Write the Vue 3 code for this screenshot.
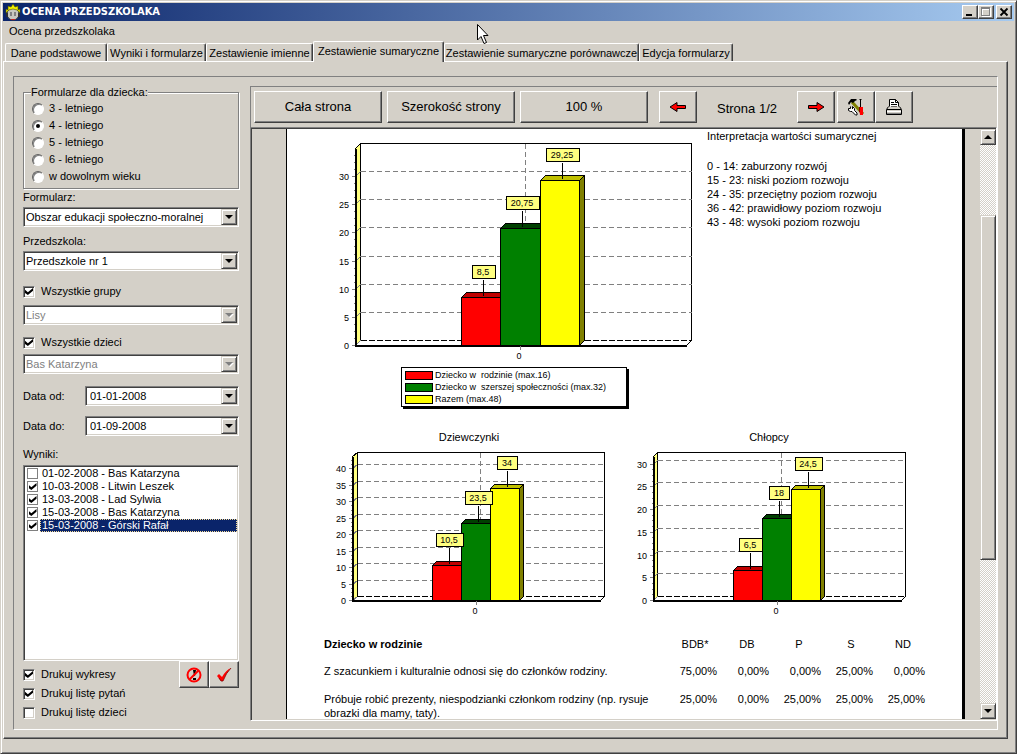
<script setup>
import { ref } from 'vue'

const tabs = [
  'Dane podstawowe',
  'Wyniki i formularze',
  'Zestawienie imienne',
  'Zestawienie sumaryczne',
  'Zestawienie sumaryczne porównawcze',
  'Edycja formularzy'
]
const activeTab = ref(3)

const ages = ['3 - letniego', '4 - letniego', '5 - letniego', '6 - letniego', 'w dowolnym wieku']
const age = ref(1)

const allGroups = ref(true)
const allChildren = ref(true)
const dateFrom = ref('01-01-2008')
const dateTo = ref('01-09-2008')

const results = ref([
  { text: '01-02-2008 - Bas Katarzyna', on: false },
  { text: '10-03-2008 - Litwin Leszek', on: true },
  { text: '13-03-2008 - Lad Sylwia', on: true },
  { text: '15-03-2008 - Bas Katarzyna', on: true },
  { text: '15-03-2008 - Górski Rafał', on: true }
])
const selectedResult = 4

const printOptions = ref([
  { text: 'Drukuj wykresy', on: true },
  { text: 'Drukuj listę pytań', on: true },
  { text: 'Drukuj listę dzieci', on: false }
])

const series = [
  { name: 'Dziecko w  rodzinie (max.16)', front: '#ff0000', top: '#c00000', side: '#800000' },
  { name: 'Dziecko w  szerszej społeczności (max.32)', front: '#008000', top: '#004000', side: '#004000' },
  { name: 'Razem (max.48)', front: '#ffff00', top: '#c0c000', side: '#808000' }
]

function makeChart(c) {
  const y = (v) => Math.round(c.base - v * c.unit)
  const majors = []
  const minors = []
  for (let v = 0; v <= c.max; v += 5) majors.push({ v, y: y(v) })
  for (let v = 1.25; y(v) > c.top + c.depth + 2; v += 1.25) {
    if (v % 5) minors.push(y(v))
  }
  const bars = c.values.map((value, i) => {
    const x = c.bars[i]
    const right = c.bars[i + 1]
    const t = y(value)
    const label = String(value).replace('.', ',')
    const lw = [0, 0, 20, 23, 27, 33][label.length]
    const mid = Math.round((x + right) / 2) + 2
    return { ...series[i], x, right, t, label, lw, mid }
  })
  return { ...c, majors, minors, gridlines: majors.slice(1).map((m) => m.y - c.depth), bars, center: Math.round((c.bars[0] + c.bars[3]) / 2) }
}

const total = makeChart({
  w: 360, h: 222, axis: 20, wall: 25, right: 356, top: 3, base: 205, depth: 5,
  unit: 5.63, max: 30, bars: [126, 165, 205, 244], values: [8.5, 20.75, 29.25]
})
const girls = makeChart({
  title: 'Dziewczynki', w: 280, h: 174, axis: 23, wall: 28, right: 275, top: 6, base: 154, depth: 4,
  unit: 3.29, max: 40, bars: [103, 132, 161, 190], values: [10.5, 23.5, 34]
})
const boys = makeChart({
  title: 'Chłopcy', w: 280, h: 174, axis: 24, wall: 28, right: 276, top: 6, base: 154, depth: 4,
  unit: 4.55, max: 30, bars: [104, 133, 162, 191], values: [6.5, 18, 24.5]
})
const groups = [
  { id: 'total', charts: [total] },
  { id: 'split', charts: [girls, boys] }
]

const notes = [
  '0 - 14: zaburzony rozwój',
  '15 - 23: niski poziom rozwoju',
  '24 - 35: przeciętny poziom rozwoju',
  '36 - 42: prawidłowy poziom rozwoju',
  '43 - 48: wysoki poziom rozwoju'
]

const grades = ['BDB*', 'DB', 'P', 'S', 'ND']
const rows = [
  { q: 'Z szacunkiem i kulturalnie odnosi się do członków rodziny.', v: ['75,00%', '0,00%', '0,00%', '25,00%', '0,00%'] },
  { q: 'Próbuje robić prezenty, niespodzianki członkom rodziny (np. rysuje obrazki dla mamy, taty).', v: ['25,00%', '0,00%', '25,00%', '25,00%', '25,00%'] }
]
</script>

<template>
  <div class="window">
    <header class="titlebar">
      <svg class="app-icon" width="16" height="17" viewBox="0 0 16 17">
        <circle cx="8" cy="10" r="6" fill="#c8c8c0" stroke="#404040" />
        <path d="M1 9 1 5 3 6 3 2 6 3 8 0 10 3 13 2 13 6 15 5 15 9 12 6 8 5 4 6Z" fill="#f0f000" stroke="#505000" stroke-width=".6" />
        <path d="M5 8h2v4H5zM9 8h2v4H9z" fill="#808080" />
        <path d="M1 9h2v4H1zM13 9h2v4h-2z" fill="#303030" />
        <path d="M6 15h4v1H6z" fill="#c02020" />
      </svg>
      <h1>OCENA PRZEDSZKOLAKA</h1>
      <div class="caption-buttons">
        <button class="cap" aria-label="Minimalizuj">
          <svg width="12" height="10" viewBox="0 0 12 10"><path d="M2 7h6v2H2z" fill="#000" /></svg>
        </button>
        <button class="cap" aria-label="Maksymalizuj" disabled>
          <svg width="12" height="10" viewBox="0 0 12 10" shape-rendering="crispEdges">
            <path d="M2 1h9v9H2zM3 3v6h7V3z" fill="#fff" fill-rule="evenodd" />
            <path d="M1 0h9v9H1zM2 2v6h7V2z" fill="#808080" fill-rule="evenodd" />
          </svg>
        </button>
        <button class="cap close" aria-label="Zamknij">
          <svg width="12" height="10" viewBox="0 0 12 10"><path d="M2.500 1.500 9.500 8.500M9.500 1.500 2.500 8.500" stroke="#000" stroke-width="1.800" /></svg>
        </button>
      </div>
    </header>

    <nav class="menu"><a href="#">Ocena przedszkolaka</a></nav>

    <div class="tabs" role="tablist">
      <button
        v-for="(t, i) in tabs"
        :key="t"
        role="tab"
        class="tab"
        :class="{ active: i === activeTab }"
        :aria-selected="i === activeTab"
        @click="activeTab = i"
      >{{ t }}</button>
    </div>

    <main class="tabpage">
      <div class="panel">
        <form class="sidebar" @submit.prevent>
          <fieldset>
            <legend>Formularze dla dziecka:</legend>
            <label v-for="(a, i) in ages" :key="a" class="radio">
              <input v-model="age" type="radio" name="age" :value="i" />{{ a }}
            </label>
          </fieldset>

          <label class="caption first" for="form">Formularz:</label>
          <div class="combo">
            <select id="form"><option>Obszar edukacji społeczno-moralnej</option></select>
            <span class="drop" aria-hidden="true"></span>
          </div>

          <label class="caption second" for="school">Przedszkola:</label>
          <div class="combo">
            <select id="school"><option>Przedszkole nr 1</option></select>
            <span class="drop" aria-hidden="true"></span>
          </div>

          <label class="check groups"><input v-model="allGroups" type="checkbox" />Wszystkie grupy</label>
          <div class="combo">
            <select aria-label="Grupa" :disabled="allGroups"><option>Lisy</option></select>
            <span class="drop" :class="{ off: allGroups }" aria-hidden="true"></span>
          </div>

          <label class="check children"><input v-model="allChildren" type="checkbox" />Wszystkie dzieci</label>
          <div class="combo">
            <select aria-label="Dziecko" :disabled="allChildren"><option>Bas Katarzyna</option></select>
            <span class="drop" :class="{ off: allChildren }" aria-hidden="true"></span>
          </div>

          <div class="date from">
            <label for="from">Data od:</label>
            <div class="combo">
              <input id="from" v-model="dateFrom" type="text" />
              <button class="drop" type="button" aria-label="Wybierz datę od"></button>
            </div>
          </div>
          <div class="date">
            <label for="to">Data do:</label>
            <div class="combo">
              <input id="to" v-model="dateTo" type="text" />
              <button class="drop" type="button" aria-label="Wybierz datę do"></button>
            </div>
          </div>

          <span id="results" class="caption results-caption">Wyniki:</span>
          <ul class="list" aria-labelledby="results">
            <li v-for="(r, i) in results" :key="i">
              <label :class="{ selected: i === selectedResult }">
                <input v-model="r.on" type="checkbox" /><span>{{ r.text }}</span>
              </label>
            </li>
          </ul>

          <div class="bottom">
            <div class="options">
              <label v-for="o in printOptions" :key="o.text" class="check">
                <input v-model="o.on" type="checkbox" />{{ o.text }}
              </label>
            </div>
            <div class="actions">
              <button class="btn act" type="button" aria-label="Anuluj">
                <svg width="16" height="16" viewBox="0 0 16 16">
                  <path d="M7 3h3l-1 6H8zM7 11h3v2H7z" fill="#000" />
                  <circle cx="8" cy="8" r="6.500" fill="none" stroke="#f00" stroke-width="2" />
                  <path d="M12.500 3.500 3.500 12.500" stroke="#f00" stroke-width="2" />
                </svg>
              </button>
              <button class="btn act" type="button" aria-label="Zatwierdź">
                <svg width="16" height="16" viewBox="0 0 16 16">
                  <path d="M1 9 3 7 6 10 Q10 3 15 1 Q10 6 7 14 L5 14Z" fill="#f00" />
                  <path d="M3 11 5 14H7Q10 6 15 1" fill="none" stroke="#800000" stroke-width=".8" />
                </svg>
              </button>
            </div>
          </div>
        </form>

        <section class="preview">
          <div class="toolbar">
            <button class="btn wide">Cała strona</button>
            <button class="btn wide">Szerokość strony</button>
            <button class="btn wide last">100 %</button>
            <button class="btn icon" aria-label="Poprzednia strona">
              <svg width="18" height="12" viewBox="0 0 18 12"><path d="M1 6 8 1.500V4.500H16.500V7.500H8V10.500Z" fill="#f00" stroke="#000" /></svg>
            </button>
            <span class="pageno">Strona 1/2</span>
            <button class="btn icon next" aria-label="Następna strona">
              <svg width="18" height="12" viewBox="0 0 18 12"><path d="M17 6 10 1.500V4.500H1.500V7.500H10V10.500Z" fill="#f00" stroke="#000" /></svg>
            </button>
            <button class="btn icon" aria-label="Ustawienia">
              <svg width="18" height="18" viewBox="0 0 18 18">
                <path d="M5 4 16 16" stroke="#808000" stroke-width="3" />
                <path d="M1 5 4 1H9L10 2 8 3 6 5 4 4 2 7Z" fill="#000" />
                <path d="M13.500 1V9M12.500 1.500h2" stroke="#000" />
                <path d="M12 9h4v8h-3z" fill="#f00" />
                <path d="M12.500 9V14" stroke="#800000" />
                <path d="M3.500 8.500V10.500H1.500V12.500L3.500 13.500H5L8.500 17H10V15L7.500 12.500V10.500L5.500 8.500V11" fill="#fff" stroke="#000" />
              </svg>
            </button>
            <button class="btn icon" aria-label="Drukuj">
              <svg width="18" height="18" viewBox="0 0 18 18">
                <path d="M4.500 9.500V1.500H10.500L13.500 4.500V9.500Z" fill="#fff" stroke="#000" />
                <path d="M10.500 1.500V4.500H13.500M6 4.500H9M6 6.500H12M6 8.500H12" stroke="#000" fill="none" />
                <path d="M3.500 8.500 1.500 11.500V16.500H16.500V11.500L14.500 8.500" fill="#d4d0c8" stroke="#000" />
                <path d="M2 11.500H16" stroke="#000" />
                <path d="M2 13.500H16" stroke="#fff" />
                <path d="M2 15.500H16" stroke="#808080" />
              </svg>
            </button>
          </div>

          <div class="scrollbox">
            <article class="page">
              <div v-for="g in groups" :key="g.id" :class="g.id">
                <figure v-for="(c, ci) in g.charts" :key="ci">
                  <figcaption v-if="c.title">{{ c.title }}</figcaption>
                  <svg class="chart" :width="c.w" :height="c.h" :viewBox="`0 0 ${c.w} ${c.h}`">
                    <g shape-rendering="crispEdges" stroke="#000" fill="none" transform="translate(.5 .5)">
                      <path :d="`M${c.wall} ${c.top}H${c.right}V${c.base - c.depth}`" />
                      <path
                        :d="`M${c.axis} ${c.base}V${c.top + c.depth}L${c.wall} ${c.top}V${c.base - c.depth}Z`"
                        fill="#ffff80"
                      />
                      <path :d="`M${c.axis} ${c.base}L${c.wall} ${c.base - c.depth}M${c.right} ${c.base - c.depth}L${c.right - c.depth} ${c.base}`" />
                      <path :d="`M${c.wall} ${c.base - c.depth}H${c.right}`" stroke-dasharray="6 2" />
                      <g stroke="#808080">
                        <path v-for="gy in c.gridlines" :key="gy" :d="`M${c.wall} ${gy}H${c.right}`" stroke-dasharray="5 3" />
                        <path :d="`M${c.center + c.depth} ${c.top}V${c.base - c.depth}`" stroke-dasharray="5 3" />
                        <path v-for="m in c.majors" :key="m.v" :d="`M${c.axis - 4} ${m.y}H${c.axis}L${c.wall} ${m.y - c.depth}`" />
                        <path v-for="m in c.minors" :key="m" :d="`M${c.axis - 2} ${m}H${c.axis}`" />
                      </g>
                      <path :d="`M${c.axis} ${c.top + c.depth}V${c.base}H${c.right - c.depth}`" stroke-width="2" />
                      <g v-for="b in c.bars" :key="b.label">
                        <path :d="`M${b.x} ${b.t}H${b.right}V${c.base}H${b.x}Z`" :fill="b.front" />
                        <path :d="`M${b.x} ${b.t}l${c.depth} ${-c.depth}H${b.right + c.depth}L${b.right} ${b.t}Z`" :fill="b.top" />
                        <path :d="`M${b.right} ${b.t}l${c.depth} ${-c.depth}V${c.base - c.depth}L${b.right} ${c.base}Z`" :fill="b.side" />
                      </g>
                      <path :d="`M${c.center} ${c.base}V${c.base + 4}`" stroke="#808080" />
                      <g v-for="b in c.bars" :key="b.label">
                        <path :d="`M${b.mid} ${b.t - 18}V${b.t - 2}`" />
                        <rect :x="b.mid - Math.floor(b.lw / 2)" :y="b.t - 32" :width="b.lw" height="13" fill="#ffff80" />
                      </g>
                    </g>
                    <text v-for="m in c.majors" :key="m.v" :x="c.axis - 6" :y="m.y + 4" text-anchor="end">{{ m.v }}</text>
                    <text v-for="b in c.bars" :key="b.label" :x="b.mid" :y="b.t - 22" text-anchor="middle">{{ b.label }}</text>
                    <text :x="c.center - 1" :y="c.base + 14" text-anchor="middle">0</text>
                  </svg>
                  <ul v-if="!c.title" class="key">
                    <li v-for="s in series" :key="s.name"><i :style="{ background: s.front }"></i>{{ s.name }}</li>
                  </ul>
                </figure>
                <div v-if="g.id === 'total'" class="notes">
                  <h2>Interpretacja wartości sumarycznej</h2>
                  <p v-for="n in notes" :key="n">{{ n }}</p>
                </div>
              </div>

              <table>
                <thead>
                  <tr>
                    <th class="q" scope="col">Dziecko w rodzinie</th>
                    <th v-for="gr in grades" :key="gr" scope="col">{{ gr }}</th>
                  </tr>
                </thead>
                <tbody>
                  <tr v-for="r in rows" :key="r.q">
                    <td class="q">{{ r.q }}</td>
                    <td v-for="(v, i) in r.v" :key="i">{{ v }}</td>
                  </tr>
                </tbody>
              </table>
            </article>

            <div class="scrollbar">
              <button class="arrow up" aria-label="Przewiń w górę"></button>
              <div class="track">
                <div class="before"></div>
                <div class="thumb"></div>
                <div class="after"></div>
              </div>
              <button class="arrow down" aria-label="Przewiń w dół"></button>
            </div>
          </div>
        </section>
      </div>
    </main>

    <svg class="pointer" width="13" height="22" viewBox="0 0 13 22" aria-hidden="true">
      <path d="M1.500 1.500V17L5 13.500 8 20.500 10.500 19.500 7.500 12.500H12Z" fill="#fff" stroke="#000" />
    </svg>
  </div>
</template>

<style>
body {
  background: #d4d0c8;
}
</style>

<style scoped>
.window,
.window * {
  box-sizing: border-box;
}
.window {
  position: relative;
  display: flex;
  flex-direction: column;
  height: 100vh;
  padding: 2px;
  overflow: hidden;
  border: 1px solid;
  border-color: #d4d0c8 #404040 #404040 #d4d0c8;
  box-shadow: inset 1px 1px #fff, inset -1px -1px #808080;
  background: #d4d0c8;
  color: #000;
  font: 11px/13px "Liberation Sans", Arial, sans-serif;
}
button,
input,
select {
  margin: 0;
  font: inherit;
  color: inherit;
}
button {
  padding: 0;
  border-radius: 0;
}
ul,
figure,
h1,
h2,
p {
  margin: 0;
  padding: 0;
  list-style: none;
}

/* title bar */
.titlebar {
  display: flex;
  flex: none;
  align-items: center;
  height: 18px;
  padding: 0 2px;
  background: linear-gradient(90deg, #0a246a, #a6caf0);
}
.titlebar h1 {
  flex: 1;
  margin-left: 1px;
  color: #fff;
  font: bold 11px/14px "DejaVu Sans Condensed", "DejaVu Sans", sans-serif;
}
.caption-buttons {
  display: flex;
}
.cap {
  display: flex;
  width: 16px;
  height: 14px;
  padding: 1px;
  border: 1px solid;
  border-color: #fff #404040 #404040 #fff;
  box-shadow: inset -1px -1px #808080;
  background: #d4d0c8;
}
.cap.close {
  margin-left: 2px;
}
.menu {
  flex: none;
  height: 20px;
  padding: 4px 6px;
}
.menu a {
  color: #000;
  text-decoration: none;
}

/* tabs */
.tabs {
  display: grid;
  flex: none;
  grid-template-columns: 102px 99px 107px 131px 195px 94px;
  align-items: end;
  height: 20px;
  padding-left: 2px;
}
.tab {
  height: 18px;
  padding: 1px 0 0;
  border: 1px solid;
  border-color: #fff #404040 transparent #fff;
  border-bottom: 0;
  border-radius: 2px 2px 0 0;
  box-shadow: inset -1px 0 #808080;
  background: #d4d0c8;
  text-align: center;
  white-space: nowrap;
}
.tab.active {
  z-index: 1;
  height: 21px;
  margin-bottom: -1px;
  padding-bottom: 3px;
}
.tabpage {
  display: flex;
  flex: 1;
  min-height: 0;
  margin: 0 6px 12px 0;
  padding: 14px 9px 8px;
  border: 1px solid;
  border-color: #fff #404040 #404040 #fff;
  box-shadow: inset -1px -1px #808080;
}
.panel {
  display: flex;
  flex: 1;
  gap: 11px;
  min-width: 0;
  padding: 9px 0 8px 9px;
  border: 1px solid;
  border-color: #808080 #fff #fff #808080;
}

/* sidebar */
.sidebar {
  display: flex;
  flex: none;
  flex-direction: column;
  width: 216px;
}
fieldset {
  min-width: 0;
  margin: 0;
  padding: 1px 8px 3px;
  border: 1px solid #808080;
  box-shadow: 1px 1px #fff, inset 1px 1px #fff;
}
legend {
  margin-left: -1px;
  padding: 0;
  background: #d4d0c8;
}
.radio {
  display: flex;
  align-items: center;
  height: 17px;
}
input[type='radio'] {
  display: grid;
  place-items: center;
  width: 12px;
  height: 12px;
  margin-right: 5px;
  appearance: none;
  border: 1px solid;
  border-color: #606060 #fff #fff #606060;
  border-radius: 50%;
  background: #fff;
  box-shadow: inset 1px 1px #808080;
}
input[type='radio']:checked::before {
  content: '';
  width: 4px;
  height: 4px;
  border-radius: 50%;
  background: #000;
}
.caption {
  height: 13px;
}
.caption.first {
  margin: 2px 0 3px;
}
.caption.second {
  margin: 8px 0 3px;
}
.combo {
  display: grid;
  grid-template-columns: 1fr 16px;
  height: 20px;
  padding: 1px;
  border: 1px solid;
  border-color: #808080 #fff #fff #808080;
  box-shadow: inset 1px 1px #404040, inset -1px -1px #d4d0c8;
  background: #fff;
}
.combo select,
.combo input {
  grid-row: 1;
  grid-column: 1 / 3;
  width: 100%;
  min-width: 0;
  height: 16px;
  padding: 0 16px 0 1px;
  appearance: none;
  border: 0;
  border-radius: 0;
  outline: 0;
  background: transparent;
}
.combo select:disabled {
  color: #808080;
  opacity: 1;
}
.combo input {
  padding-left: 3px;
}
.drop {
  display: grid;
  grid-row: 1;
  grid-column: 2;
  place-items: center;
  border: 1px solid;
  border-color: #d4d0c8 #404040 #404040 #d4d0c8;
  box-shadow: inset 1px 1px #fff, inset -1px -1px #808080;
  background: #d4d0c8;
  pointer-events: none;
}
.drop::before {
  content: '';
  border: solid transparent;
  border-width: 4px 4px 0;
  border-top-color: #000;
}
.drop.off::before {
  border-top-color: #808080;
  filter: drop-shadow(1px 1px #fff);
}
.check {
  display: flex;
  align-items: center;
  height: 13px;
}
.check.groups {
  margin: 14px 0 7px;
}
.check.children {
  margin: 11px 0 5px;
}
input[type='checkbox'] {
  display: grid;
  flex: none;
  place-items: center;
  width: 12px;
  height: 12px;
  margin-right: 6px;
  appearance: none;
  border: 1px solid;
  border-color: #808080 #fff #fff #808080;
  box-shadow: inset 1px 1px #404040, inset -1px -1px #d4d0c8;
  background: #fff;
}
input[type='checkbox']:checked::before {
  content: '';
  width: 8px;
  height: 7px;
  background: #000;
  clip-path: polygon(0 25%, 36% 60%, 100% 0, 100% 40%, 36% 100%, 0 70%);
}
.date {
  display: grid;
  grid-template-columns: 62px 1fr;
  align-items: center;
  margin-top: 10px;
}
.date.from {
  margin-top: 12px;
}
.results-caption {
  margin: 12px 0 4px;
}
.list {
  flex: 1;
  min-height: 0;
  padding: 1px;
  overflow: hidden;
  border: 1px solid;
  border-color: #808080 #fff #fff #808080;
  box-shadow: inset 1px 1px #404040, inset -1px -1px #d4d0c8;
  background: #fff;
}
.list label {
  display: flex;
  align-items: center;
  height: 13px;
  padding-left: 2px;
}
.list input[type='checkbox'] {
  width: 11px;
  height: 11px;
  margin-right: 2px;
  border-color: #808080;
  box-shadow: none;
}
.list span {
  flex: 1;
  height: 13px;
  padding-left: 2px;
}
.list .selected span {
  outline: 1px dotted #f5db95;
  outline-offset: -1px;
  background: #0a246a;
  color: #fff;
}
.bottom {
  display: flex;
  justify-content: space-between;
  height: 60px;
}
.options {
  display: grid;
  gap: 6px;
  align-content: start;
  padding-top: 7px;
}
.actions {
  display: flex;
  align-items: flex-start;
}

/* raised push buttons */
.btn {
  display: flex;
  flex: none;
  align-items: center;
  justify-content: center;
  border: 1px solid;
  border-color: #fff #404040 #404040 #fff;
  box-shadow: inset -1px -1px #808080;
  background: #d4d0c8;
}
.btn.act {
  width: 30px;
  height: 27px;
}

/* preview */
.preview {
  display: flex;
  flex: 1;
  flex-direction: column;
  min-width: 0;
}
.toolbar {
  display: flex;
  flex: none;
  align-items: center;
  height: 41px;
  padding-left: 3px;
  border: solid #808080;
  border-width: 1px 0 0 1px;
  font-size: 13px;
  line-height: 16px;
}
.btn.wide {
  width: 128px;
  height: 32px;
  margin-right: 5px;
}
.btn.wide.last {
  margin-right: 11px;
}
.btn.icon {
  width: 38px;
  height: 32px;
}
.btn.next {
  margin-right: 2px;
}
.pageno {
  flex: none;
  width: 100px;
  padding-top: 4px;
  text-align: center;
}
.scrollbox {
  display: flex;
  flex: 1;
  min-height: 0;
  padding: 1px 0 1px 35px;
  border: 1px solid;
  border-color: #808080 #fff #fff #808080;
  box-shadow: inset 1px 1px #404040;
}
.page {
  flex: 1;
  min-width: 0;
  margin-right: 15px;
  overflow: hidden;
  border: solid #000;
  border-width: 0 3px 0 1px;
  background: #fff;
}
.total {
  display: grid;
  grid-template-columns: 420px 1fr;
}
.total figure {
  padding: 11px 0 0 48px;
}
.notes {
  font-size: 11px;
  line-height: 14px;
}
.notes h2 {
  margin-bottom: 16px;
  font: inherit;
}
.chart {
  display: block;
  font-size: 9px;
}
.key {
  width: 226px;
  margin: 5px 0 0 66px;
  padding: 1px 3px;
  border: 1px solid #000;
  box-shadow: 2px 2px #000;
  font-size: 9px;
  line-height: 12px;
  white-space: pre;
}
.key li {
  display: flex;
  align-items: center;
  gap: 2px;
  height: 12px;
}
.key i {
  flex: none;
  width: 28px;
  height: 9px;
  border: 1px solid #000;
}
.split {
  display: flex;
  gap: 20px;
  margin: 23px 0 0 42px;
  text-align: center;
}
figcaption {
  margin-bottom: 2px;
  font-size: 11px;
  line-height: 14px;
}
table {
  width: 601px;
  margin: 17px 0 0 37px;
  border-collapse: collapse;
  table-layout: fixed;
  font-size: 11px;
  line-height: 14px;
}
th,
td {
  width: 52px;
  padding: 0 0 14px 8px;
  font-weight: normal;
  text-align: right;
  vertical-align: top;
}
th {
  padding-bottom: 13px;
  text-align: center;
}
.q {
  width: 341px;
  padding-left: 0;
  text-align: left;
}
th.q {
  font-weight: bold;
}

/* scroll bar */
.scrollbar {
  display: flex;
  flex: none;
  flex-direction: column;
  width: 16px;
  background: repeating-conic-gradient(#fff 0 25%, #d4d0c8 0 50%) 0 0 / 2px 2px;
}
.arrow,
.thumb {
  border: 1px solid;
  border-color: #d4d0c8 #404040 #404040 #d4d0c8;
  box-shadow: inset 1px 1px #fff, inset -1px -1px #808080;
  background: #d4d0c8;
}
.arrow {
  display: grid;
  flex: none;
  place-items: center;
  height: 16px;
}
.arrow::before {
  content: '';
  border: solid transparent;
}
.up::before {
  border-width: 0 4px 4px;
  border-bottom-color: #000;
}
.down::before {
  border-width: 4px 4px 0;
  border-top-color: #000;
}
.track {
  display: flex;
  flex: 1;
  flex-direction: column;
}
.before {
  flex: 70;
}
.thumb {
  flex: 344;
}
.after {
  flex: 144;
}

/* mouse pointer above the window */
.pointer {
  position: absolute;
  top: 22px;
  left: 475px;
}
</style>
